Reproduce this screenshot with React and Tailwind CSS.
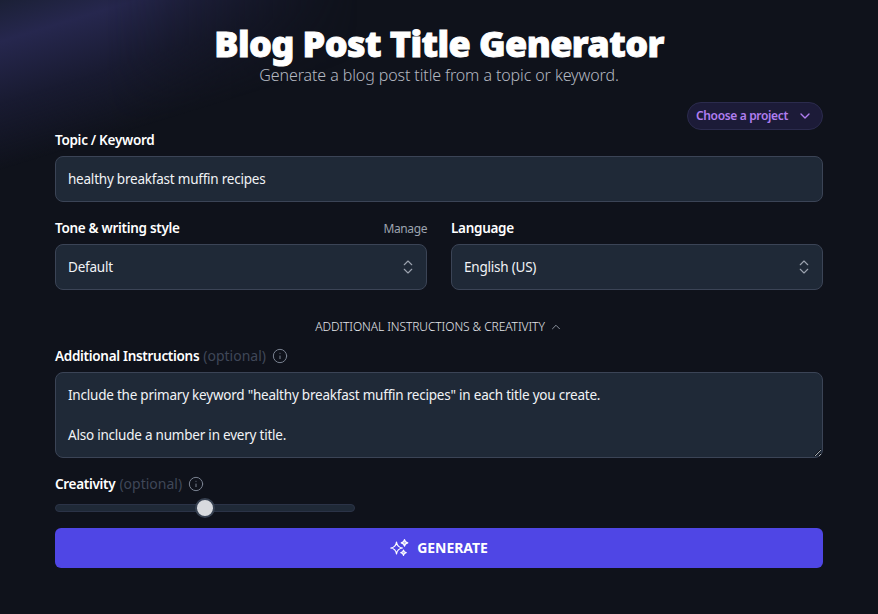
import React from "react";
import { ChevronDown, ChevronUp, ChevronsUpDown, Info } from "lucide-react";

const font = "font-['Noto_Sans','Open_Sans',sans-serif]";
const fieldText = "text-[13.5px] tracking-[-0.22px] text-[#f1f3f6]";

const Label = ({ children }) => (
  <label className="block text-[13.5px] leading-5 tracking-[-0.3px] font-semibold text-white">{children}</label>
);

const Optional = () => (
  <span className="ml-1 text-[14px] leading-5 font-normal text-[#3f4758]">(optional)</span>
);

const SelectBox = ({ value }) => (
  <div className={`mt-1.5 flex h-[46px] items-center justify-between rounded-lg border border-[#3b4456] bg-[#1f2937] pl-3 pr-[9px] ${fieldText}`}>
    <span>{value}</span>
    <ChevronsUpDown className="h-[18px] w-[18px] text-[#9ca3af]" strokeWidth={1.5} />
  </div>
);

// big outlined star with two small ones, as on the generate button
const StarsIcon = () => (
  <svg width="20" height="20" viewBox="0 0 20 20" fill="none" stroke="currentColor" strokeWidth="1.2" strokeLinejoin="round">
    <path d="M6.5 4 C7 8 8.5 9.5 12.5 10 C8.5 10.5 7 12 6.5 16 C6 12 4.5 10.5 0.8 10 C4.5 9.5 6 8 6.5 4 Z" />
    <path d="M14.5 1.5 C14.8 3.6 15.6 4.4 17.8 4.8 C15.6 5.2 14.8 6 14.5 8.2 C14.2 6 13.4 5.2 11.2 4.8 C13.4 4.4 14.2 3.6 14.5 1.5 Z" fill="currentColor" fillOpacity="0.6" />
    <path d="M13.5 12 C13.8 13.6 14.4 14.2 16.2 14.6 C14.4 15 13.8 15.6 13.5 17.4 C13.2 15.6 12.6 15 10.8 14.6 C12.6 14.2 13.2 13.6 13.5 12 Z" fill="currentColor" fillOpacity="0.6" />
  </svg>
);

export default function App() {
  return (
    <div className={`relative h-[614px] overflow-hidden bg-[#0f121b] ${font}`}>
      {/* glow in the top left corner */}
      <div className="pointer-events-none absolute left-0 top-0 h-[170px] w-[420px] bg-[linear-gradient(163deg,#1b2036_0%,#26274e_14%,#191b32_34%,#0f121b00_57%)] [mask-image:linear-gradient(to_right,black_25%,transparent_85%)]" />

      <div className="relative px-[55px] pt-[25px]">
        <h1 className="text-center text-[36px] leading-[38px] tracking-[-0.6px] font-black text-white [-webkit-text-stroke:0.9px_white]">
          Blog Post Title Generator
        </h1>
        <p className="text-center text-[16px] leading-6 tracking-[-0.1px] font-light text-[#b4b8c1]">
          Generate a blog post title from a topic or keyword.
        </p>

        <div className="mt-[15px] flex justify-end">
          <button className="flex h-7 w-[136px] items-center justify-between rounded-full border border-[#2b2b4d] bg-[#1c1b38] pl-2 pr-[9px] text-[12px] tracking-[-0.35px] font-semibold text-[#b07ef0]">
            Choose a project
            <ChevronDown className="h-4 w-4" strokeWidth={2} />
          </button>
        </div>

        <Label>Topic / Keyword</Label>
        <input
          readOnly
          value="healthy breakfast muffin recipes"
          className={`mt-1.5 block h-[46px] w-full rounded-lg border border-[#3b4456] bg-[#1f2937] px-3 outline-none ${fieldText}`}
        />

        <div className="mt-4 grid grid-cols-2 gap-6">
          <div>
            <div className="flex items-center justify-between">
              <Label>Tone &amp; writing style</Label>
              <span className="translate-y-px text-[12px] leading-5 tracking-[-0.4px] text-[#9ca3af]">Manage</span>
            </div>
            <SelectBox value="Default" />
          </div>
          <div>
            <Label>Language</Label>
            <SelectBox value="English (US)" />
          </div>
        </div>

        <div className="mt-[27px] flex h-5 items-center justify-center gap-1 text-[12px] tracking-[-0.08px] font-light text-[#e5e7eb]">
          ADDITIONAL INSTRUCTIONS &amp; CREATIVITY
          <ChevronUp className="h-3.5 w-3.5 text-[#9ca3af]" strokeWidth={1.5} />
        </div>

        <div className="mt-[9px] flex h-5 items-center">
          <Label>Additional Instructions</Label>
          <Optional />
          <Info className="ml-1.5 h-4 w-4 text-[#7a8291]" strokeWidth={1.5} />
        </div>
        <textarea
          readOnly
          value={'Include the primary keyword "healthy breakfast muffin recipes" in each title you create.\n\nAlso include a number in every title.'}
          className={`mt-1.5 block h-[86px] w-full rounded-lg border border-[#3b4456] bg-[#1f2937] px-3 py-[12px] leading-[20px] outline-none ${fieldText}`}
        />

        <div className="mt-4 flex h-5 items-center">
          <Label>Creativity</Label>
          <Optional />
          <Info className="ml-1.5 h-4 w-4 text-[#7a8291]" strokeWidth={1.5} />
        </div>
        <div className="relative mt-2.5 h-2 w-[300px] rounded-full border border-[#2b3347] bg-[#1f2937]">
          <div className="absolute left-[139px] top-1/2 h-5 w-5 -translate-y-1/2 rounded-full border-2 border-[#374151] bg-[#d8dade]" />
        </div>

        <button className="mt-4 flex h-10 w-full items-center justify-center gap-[7px] rounded-md bg-[#4f46e5] pb-px text-[14px] font-bold tracking-[-0.05px] text-white">
          <StarsIcon />
          GENERATE
        </button>
      </div>
    </div>
  );
}
